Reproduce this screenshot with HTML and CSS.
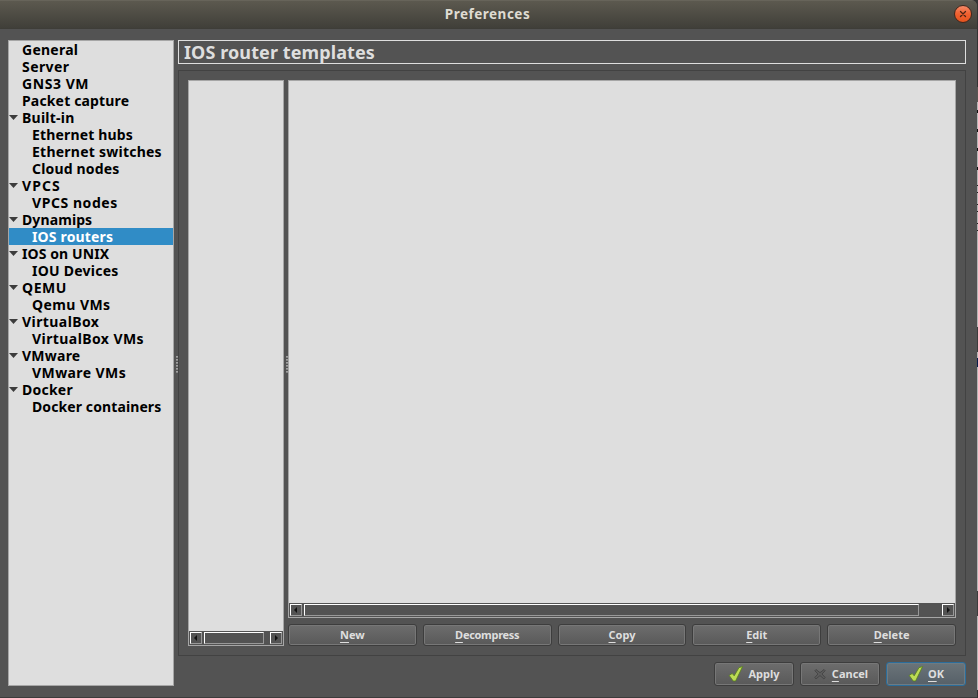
FILE: index.html
```
<!DOCTYPE html>
<html lang="en">
<head>
<meta charset="utf-8">
<title>Preferences</title>
<link rel="stylesheet" href="styles.css">
</head>
<body>
<div class="window">
  <header class="titlebar">
    <h1 class="caption">Preferences</h1>
    <button class="close" aria-label="Close"><svg width="18" height="18" viewBox="0 0 18 18"><path d="M6.5 6.5l5 5M11.5 6.5l-5 5" stroke="#4b2415" stroke-width="1.3" stroke-linecap="round"/></svg></button>
  </header>
  <main class="content">
    <ul class="tree">
      <li class="open"><span>General</span></li>
      <li class="wide"><span>Server</span></li>
      <li class="wider"><span>GNS3 VM</span></li>
      <li><span>Packet capture</span></li>
      <li class="parent open"><span>Built-in</span></li>
      <li class="child"><span>Ethernet hubs</span></li>
      <li class="child open"><span>Ethernet switches</span></li>
      <li class="child"><span>Cloud nodes</span></li>
      <li class="parent widest"><span>VPCS</span></li>
      <li class="child wider"><span>VPCS nodes</span></li>
      <li class="parent tight"><span>Dynamips</span></li>
      <li class="child selected"><span>IOS routers</span></li>
      <li class="parent tight"><span>IOS on UNIX</span></li>
      <li class="child open"><span>IOU Devices</span></li>
      <li class="parent wider"><span>QEMU</span></li>
      <li class="child wide"><span>Qemu VMs</span></li>
      <li class="parent wide"><span>VirtualBox</span></li>
      <li class="child wide"><span>VirtualBox VMs</span></li>
      <li class="parent open"><span>VMware</span></li>
      <li class="child wide"><span>VMware VMs</span></li>
      <li class="parent open"><span>Docker</span></li>
      <li class="child tight"><span>Docker containers</span></li>
    </ul>
    <div class="grip"></div>
    <section class="page">
      <h2 class="heading"><span>IOS router templates</span></h2>
      <div class="frame">
        <div class="list templates">
          <div class="scrollbar"><i class="arrow left"></i><i class="thumb"></i><i class="arrow right"></i></div>
        </div>
        <div class="grip inner"></div>
        <div class="details">
          <div class="list info">
            <div class="scrollbar"><i class="arrow left"></i><i class="thumb"></i><i class="arrow right"></i></div>
          </div>
          <div class="actions">
            <button class="btn"><span><u>N</u>ew</span></button>
            <button class="btn condensed"><span><u>D</u>ecompress</span></button>
            <button class="btn"><span><u>C</u>opy</span></button>
            <button class="btn"><span><u>E</u>dit</span></button>
            <button class="btn"><span><u>D</u>elete</span></button>
          </div>
        </div>
      </div>
      <div class="dialog-buttons">
        <button class="btn"><svg class="icon" width="16" height="16" viewBox="0 0 16 16"><path d="M1.2 9.4l3-1.9 2 2.3L11 1.6l3.6-1L7.6 15H5.2z" fill="#bddc55" stroke="#557f1c" stroke-width=".8" stroke-linejoin="round"/></svg><span>Apply</span></button>
        <button class="btn"><svg class="icon" width="16" height="16" viewBox="0 0 16 16"><path d="M4 3.5l4 3.2 4-3.2 1.2 1.2L10 8l3.3 3.6-1.4 1.3L8 9.6l-4 3.3-1.3-1.3L6 8 2.8 4.8z" fill="#5c5c5c" stroke="#444" stroke-width=".9"/></svg><span><u>C</u>ancel</span></button>
        <button class="btn primary"><svg class="icon" width="16" height="16" viewBox="0 0 16 16"><path d="M1.2 9.4l3-1.9 2 2.3L11 1.6l3.6-1L7.6 15H5.2z" fill="#bddc55" stroke="#557f1c" stroke-width=".8" stroke-linejoin="round"/></svg><span><u>O</u>K</span></button>
      </div>
    </section>
  </main>
</div>
</body>
</html>
```
FILE: styles.css
```
* { box-sizing: border-box; }

body {
  margin: 0;
  width: 978px;
  height: 698px;
  overflow: hidden;
  font-family: "Noto Sans", "Open Sans", sans-serif;
  font-weight: 700;
  background: linear-gradient(#333 0 87px, #5a5552 87px 102px, #b4b4b4 102px 110px, #111 110px 113px, #b4b4b4 113px 129px, #111 129px 132px, #b4b4b4 132px 148px, #111 148px 151px, #b4b4b4 151px 167px, #111 167px 170px, #b4b4b4 170px 185px, #222 185px 186px, #b4b4b4 186px 192px, #222 192px 193px, #b4b4b4 193px 204px, #222 204px 205px, #b4b4b4 205px 211px, #222 211px 212px, #b4b4b4 212px 223px, #222 223px 224px, #b4b4b4 224px 230px, #222 230px 231px, #b4b4b4 231px 327px, #3c3c3c 327px 352px, #b4b4b4 352px 358px, #0a1c4a 358px 367px, #b4b4b4 367px 591px, #3c3c3c 591px 616px, #b4b4b4 616px 690px, #333 690px);
}

button { font: inherit; margin: 0; padding: 0; }

.window {
  display: flex;
  flex-direction: column;
  width: 977px;
  height: 698px;
  background: #535353;
  border-bottom: 1px solid #3b3b3b;
  border-radius: 0 6px 0 0;
}

.titlebar {
  display: grid;
  grid-template-columns: 18px 1fr 18px;
  align-items: center;
  height: 29px;
  padding: 0 5px;
  background: linear-gradient(#67645a 0 1px, #5c594f 1px, #403f39 28px, #3c3b37);
  border-radius: 0 6px 0 0;
}

.caption {
  grid-column: 2;
  margin: 0 2px 1px 0;
  text-align: center;
  font-size: 13.5px;
  line-height: 27px;
  color: #dfdbd2;
  letter-spacing: 0.5px;
}

.close {
  width: 18px;
  height: 18px;
  margin-top: -1px;
  border: 1px solid #43261b;
  border-radius: 50%;
  background: linear-gradient(#f58a68, #f0602f 50%, #e4541f);
}

.close svg { display: block; margin: -1px; }

.content { display: flex; height: 668px; padding: 11px 11px 11px 8px; }

.tree {
  width: 166px;
  height: 646px;
  margin: 0;
  padding: 0;
  border: 1px solid #a6a6a6;
  background: #dedede;
  color: #000;
  list-style: none;
  font-size: 14px;
  line-height: 17px;
  letter-spacing: 0.16px;
}

.tree li { position: relative; height: 17px; padding-left: 13px; white-space: nowrap; }
.tree .child { padding-left: 23px; }
.tree .selected { background: #308cc6; color: #fff; }

.tight { letter-spacing: 0.1px; }
.open { letter-spacing: 0.24px; }
.wide { letter-spacing: 0.42px; }
.wider { letter-spacing: 0.56px; }
.widest { letter-spacing: 1.1px; }

.parent::before {
  content: "";
  position: absolute;
  left: 0;
  top: 6px;
  width: 9px;
  height: 5px;
  background: #3c3c3c;
  clip-path: polygon(0 0, 100% 0, 50% 100%);
}

.grip {
  width: 4px;
  height: 18px;
  margin-top: 316px;
  background: repeating-linear-gradient(#a0a0a0 0 1px, #858585 1px 2px, #535353 2px 3px) 2px 0 / 2px 18px no-repeat;
}

.inner { margin-top: 276px; }

.page { width: 788px; }

.heading {
  height: 24px;
  margin: 0 0 6px;
  padding-left: 5px;
  border: 1px solid #dedede;
  color: #dedede;
  font-size: 18px;
  line-height: 23px;
  letter-spacing: 0.1px;
}

.frame { display: flex; height: 586px; padding: 9px; border: 1px solid #424242; }

.list {
  display: flex;
  flex-direction: column;
  justify-content: flex-end;
  border: 1px solid #a6a6a6;
  background: #dedede;
}

.templates { width: 96px; height: 566px; }
.details { width: 668px; }
.info { height: 538px; margin-bottom: 6px; }

.scrollbar { display: flex; height: 14px; padding: 1px 0 0 1px; background: #535353; }

.arrow, .thumb {
  height: 12px;
  border: 1px solid;
  border-color: #fff #999 #999 #fff;
}

.arrow { display: grid; place-items: center; width: 12px; }
.arrow::before { content: ""; border: solid transparent; }
.left::before { margin-right: 1px; border-width: 3px 3px 3px 0; border-right-color: #111; }
.right::before { border-width: 3px 0 3px 3px; border-left-color: #111; }
.thumb { width: 60px; margin: 0 6px 0 2px; }
.info .thumb { width: 615px; margin-right: 23px; }

.actions { display: grid; grid-template-columns: repeat(5, 1fr); gap: 6px; }

.btn {
  display: flex;
  align-items: center;
  justify-content: center;
  height: 22px;
  border: 1px solid #3d3d3d;
  border-radius: 3px;
  background: linear-gradient(#6d6d6d, #595959);
  box-shadow: inset 0 0 0 1px #777;
  color: #dedede;
  font-size: 11px;
  line-height: 20px;
}

.condensed { letter-spacing: -0.3px; }

.btn u { text-underline-offset: 3px; text-decoration-thickness: 1px; }

.dialog-buttons { display: flex; justify-content: flex-end; gap: 6px; margin-top: 6px; }
.dialog-buttons .btn { width: 80px; height: 24px; gap: 4px; }
.primary { border-color: #2b6d9b; background: linear-gradient(#6b7479, #566068); box-shadow: inset 0 0 0 1px #6c7b84; }
```
